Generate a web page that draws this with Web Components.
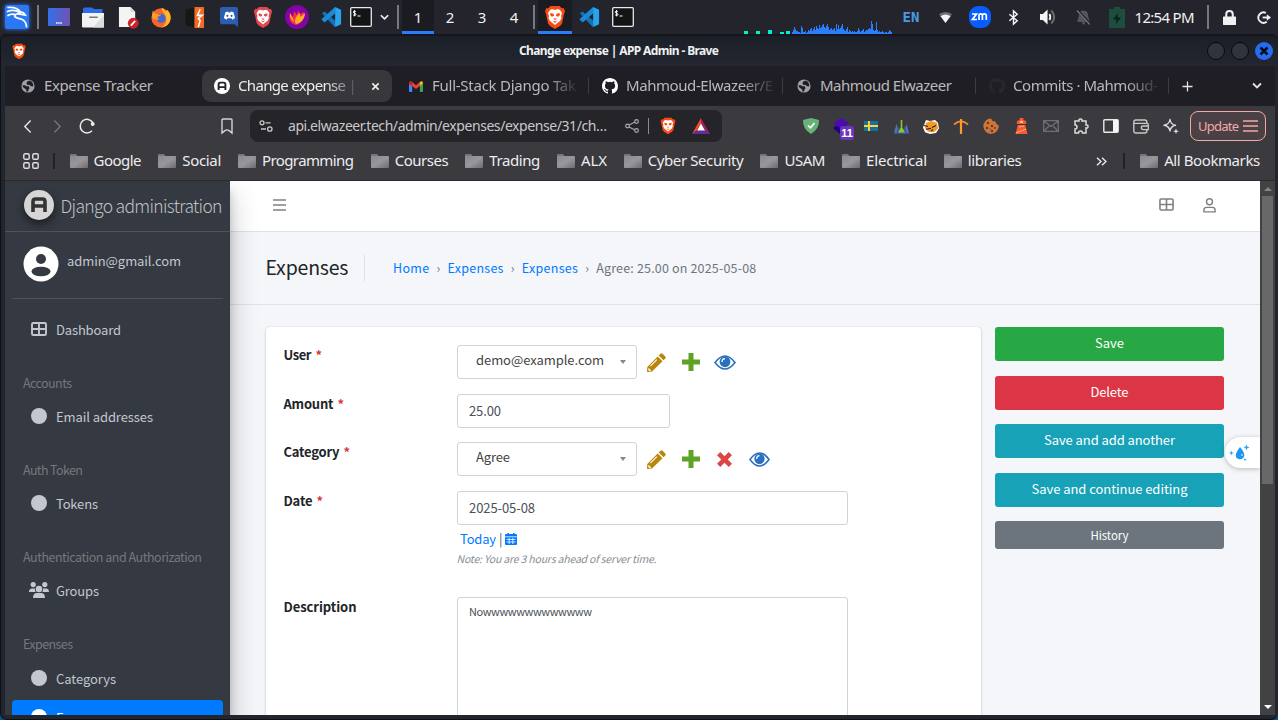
<!DOCTYPE html>
<html lang="en">
<head>
<meta charset="utf-8">
<title>Change expense | APP Admin</title>
<style>
html,body{margin:0;height:720px;overflow:hidden;background:#22242d}
body{font-family:"Noto Sans",sans-serif;font-size:15px;color:#e6e6e8}
</style>
</head>
<body>
<desktop-screen></desktop-screen>
<script>
const lion = (c='#fff',f='#fb542b') => `<path fill="${c}" d="M7 5l2-1 3 1 3-1 2 1 2 3-1 3 .5 2-1.500 3-2.500 2-2.500 2-2.500-2-2.500-2-1.500-3 .5-2-1-3z"/><path fill="${f}" d="M7.500 8l3 .7.600 2-2.200 1-1.900-1.800zM16.500 8l-3 .7-.6 2 2.200 1 1.900-1.800zM10 13.500h4l-2 1.600zM9.500 15.500l2.500 1 2.500-1-2.500 2.500z"/>`;
const shieldPath = 'M7.500 1h9l2.200 2.300 1.800-.3 1.500 3-1 3-2 9.500-2 2.500-5 3-5-3-2-2.500-2-9.500-1-3 1.500-3 1.800.3z';
const octocat = 'M8 0C3.580 0 0 3.580 0 8c0 3.540 2.290 6.530 5.470 7.590.4.070.55-.17.55-.38 0-.19-.01-.82-.01-1.490-2.010.37-2.530-.49-2.690-.94-.09-.23-.48-.94-.82-1.130-.28-.15-.68-.52-.01-.53.630-.01 1.080.58 1.230.82.72 1.210 1.870.87 2.330.66.070-.52.28-.87.510-1.070-1.780-.2-3.640-.89-3.640-3.950 0-.87.310-1.590.82-2.150-.08-.2-.36-1.020.08-2.120 0 0 .67-.21 2.200.82a7.600 7.600 0 0 1 4 0c1.530-1.040 2.200-.82 2.200-.82.44 1.100.16 1.920.08 2.120.51.56.82 1.270.82 2.150 0 3.070-1.870 3.750-3.650 3.950.29.25.54.73.54 1.480 0 1.070-.01 1.930-.01 2.200 0 .21.15.46.55.38A8 8 0 0 0 16 8c0-4.420-3.580-8-8-8z';
const globe = '<circle cx="8" cy="8" r="7.500" fill="#9ea1a6"/><path fill="#1f1e24" d="M1.500 7l3 .2 1.800 1.200 2.500 0 1 2.200-1.300 1.400-.3 2.200-1.800.3-.7-2.800-2.800-1.800zM7 2.800l3.500-1 2.300 1.900 1.600 3.300-1.200 1.600-2.400-.6-1.200-1.500-2.200.3-1.200-1.700z"/>';
const vscode = '<path fill="#1273b8" d="M2 8l3-2 14 12-3 5z"/><path fill="#0d5f9e" d="M2 15l3 2.500L19 6l-2-5z"/><path fill="#29a3ea" d="M16.500 1L23 4v16l-6.500 3z"/><path fill="#1b8ad2" d="M1.500 14.500L16.500 1v7L5 18z"/>';
const term = '<rect x=".7" y=".7" width="20.600" height="18.600" rx="1" fill="#131415" stroke="#e8e8e8" stroke-width="1.300"/><path d="M5.800 4.800c-.7-1-2.600-.9-2.600.3 0 1.500 2.800.8 2.800 2.300 0 1.300-2.200 1.400-2.900.3M4.600 3v6.400M7.500 9h3" fill="none" stroke="#fff"/>';
const grid4 = (s) => `<rect x="1" y="1" width="14" height="12" rx="1.300" fill="none" stroke="currentColor" stroke-width="${s}"/><path d="M8 1v12M1 7h14" stroke="currentColor" stroke-width="${s}"/>`;
const ICONS = {
 kali:['0 0 26 26','<rect x="1" y="1" width="24" height="24" rx="2" fill="#2b78f5"/><path d="M4 3.500c5-.5 10 1 12.500 4.500M3.500 7.500c5-2 9-1 12 1 2.500-.8 4.500.3 5.800 2.500l-3.600-.6c-3-.9-6.500-1-7 1.300-.5 2.600 4 2.200 7 3.500 3.600 1.600 4.600 4 4.800 7.500M4 11.500c2.500-1.800 4.600-1.600 6.300-1.200" fill="none" stroke="#fff" stroke-width="1.700" stroke-linecap="round"/>'],
 desk:['0 0 22 18','<defs><linearGradient id="g"><stop stop-color="#3271e8"/><stop offset="1" stop-color="#7351b4"/></linearGradient></defs><rect width="22" height="18" rx="1" fill="url(#g)"/><path d="M8 15h6" stroke="#fff" stroke-width="1.500" stroke-dasharray="1.500 .7"/>'],
 folder:['0 0 22 21','<path fill="#2b6ee8" d="M1 2q0-1.500 1.500-1.500H10l2 1.500h8.500V8H1z"/><path fill="#f2f2f2" d="M0 6h22v13.500q0 1-1 1H1q-1 0-1-1z"/><path fill="#dcdcdc" d="M22 8v12.500H11z"/><rect x="7" y="9.500" width="9" height="1.600" rx=".8" fill="#777"/>'],
 doc:['0 0 22 24','<path fill="#f4f4f4" d="M1 1h12l5 5v16H1z"/><path fill="#d5d5d5" d="M13 1l5 5h-5z"/><circle cx="16" cy="18" r="5.700" fill="#cc2229"/><path d="M13.500 20.500l4.500-5" stroke="#fff" stroke-width="1.800"/>'],
 firefox:['0 0 24 24','<circle cx="12" cy="13" r="10.500" fill="#f7652a"/><path fill="#ffb62c" d="M13 2c2 0 3 3 3.500 4 1.500-.2 2-2 2-2 3 2 4.500 6 4 10-1 6-6 9.500-11 9.500 5-2 7-6 6-11S12 6 13 2z"/><path fill="#f6a12c" d="M3 5l2 3 4 1-4 6-3-3z"/><circle cx="12" cy="13.500" r="5" fill="#4267cf"/><path fill="#ff9330" d="M6 10l6-1-1 2-3 1 2 3H6z"/>'],
 burp:['0 0 22 20','<path fill="#171717" stroke="#333" stroke-width=".5" d="M1 2l10-2v20L1 18z"/><path fill="#f46a21" d="M11 0h9.500q.5 0 .5.500v19q0 .5-.5.500H11z"/><path d="M17 2l-3 6h5l-4 3 2 2-2 6" fill="none" stroke="#fff" stroke-width="1.500"/>'],
 discord:['0 0 20 21','<path fill="#2b5db0" d="M2 0h16q2 0 2 2v19l-4-3H2q-2 0-2-2V2q0-2 2-2z"/><path fill="#fff" d="M6 5.500l3-.8.500 1h2l.5-1 3 .8 1.700 6-3 1.800-1-1.500H8.300l-1 1.500-3-1.800z"/><circle cx="8.200" cy="9.300" r="1.200" fill="#2b5db0"/><circle cx="12.800" cy="9.300" r="1.200" fill="#2b5db0"/>'],
 bravered:['0 0 24 25',`<path fill="#e3484e" d="${shieldPath}"/>${lion('#fff','#e3484e')}`],
 brave:['0 0 24 25',`<path fill="#fa4a12" d="${shieldPath}"/>${lion('#fff','#fa4a12')}`],
 flame:['0 0 24 24','<circle cx="12" cy="12" r="12" fill="#8104a6"/><path fill="#ff2b4e" d="M8 19C4 16 4 11 5 8l3 4 1-6 3 4 1-5 2 4 4-2c1 6-3 12-8 13z"/><path fill="#ffb01c" d="M11 19c-2-2-1-7 3.500-11l1 4L20 8c0 6-4 10-9 11zM5 8c1 3 3.500 5 4 9-3-2-4.500-5-4-9z"/>'],
 vscode:['0 0 24 24',vscode], term:['0 0 22 20',term],
 chev:['0 0 12 8','<path d="M2 1.500l4 4 4-4" fill="none" stroke="currentColor" stroke-width="1.800"/>'],
 wifi:['0 0 16 14','<path fill="#6b6d72" d="M1 3.500Q8-1.500 15 3.500l-2 2.500Q8 3 3 6z"/><path fill="#f4f4f4" d="M2.600 5.600Q8 2 13.400 5.600L8 13z"/>'],
 zm:['0 0 22 22','<rect width="22" height="22" rx="9" fill="#0b5cff"/><path d="M3 8h4.500L3.400 13.500H8M10 14V9.500q0-1.700 1.700-1.700t1.700 1.700V14M13.400 9.500q0-1.700 1.900-1.700T17.300 9.500V14" fill="none" stroke="#fff" stroke-width="1.700"/>'],
 bt:['0 0 12 16','<path d="M1.500 4.500l8.500 7L6 15V1l4 3.500-8.500 7" fill="none" stroke="#f4f4f4" stroke-width="1.600"/>'],
 vol:['0 0 18 16','<path fill="#f4f4f4" d="M0 5h3l5-4.500v15L3 11H0z"/><path d="M10 5q1.800 3 0 6" fill="none" stroke="#f4f4f4" stroke-width="2"/><path d="M12 1.500q6 6.500 0 13" fill="none" stroke="#6b6d72" stroke-width="2"/>'],
 bell:['0 0 16 16','<path fill="#55575d" d="M8 1.500c4 0 5 3 5 6l1.500 4v1.500h-13V11.500L3 7.500c0-3 1-6 5-6z"/><circle cx="8" cy="14" r="1.500" fill="#55575d"/><path d="M.5.500l15 15" stroke="#22242d" stroke-width="3"/><path d="M1 1.500l13.500 14" stroke="#77797e" stroke-width="1.300"/>'],
 batt:['0 0 16 22','<path fill="#1e4d3f" d="M5 0h6v2h5v20H0V2h5z"/><path fill="#0e2019" d="M9 6l-5 7h3.500L7 18l5-7H8.500z"/>'],
 lock:['0 0 14 16','<path d="M3.500 8V4.500q0-3.500 3.500-3.500t3.500 3.500V8" fill="none" stroke="#f1f1f1" stroke-width="2.200"/><rect y="7" width="14" height="9" rx=".5" fill="#f1f1f1"/>'],
 logout:['0 0 15 14','<path d="M9.500 2A5.600 5.600 0 1 0 10.500 11.500" fill="none" stroke="#f1f1f1" stroke-width="2"/><path d="M6 7h6" stroke="#f1f1f1" stroke-width="2"/><path d="M10.500 3.500L15 7l-4.500 3.500z" fill="#f1f1f1"/>'],
 globe:['0 0 16 16',globe],
 aicon:['0 0 16 16','<circle cx="8" cy="8" r="8" fill="#fff"/><path d="M4.600 12V6.200Q4.600 4.600 6.200 4.600h3.600q1.600 0 1.600 1.600V12M4.600 9.100h6.800" fill="none" stroke="#242328" stroke-width="1.900"/>'],
 x:['0 0 10 10','<path d="M1.500 1.500l7 7m0-7l-7 7" stroke="currentColor" stroke-width="1.800"/>'],
 xbold:['0 0 10 10','<path d="M1.500 1.500l7 7m0-7l-7 7" stroke="currentColor" stroke-width="2.500"/>'],
 gmail:['0 0 16 12','<path fill="#4285f4" d="M0 2h3.600v10H1Q0 12 0 11z"/><path fill="#34a853" d="M12.400 2H16v9q0 1-1 1h-2.600z"/><path fill="#ea4335" d="M0 2.500Q0 0 2.500.4L8 4.500 13 .6V5L8 8.800 0 3z"/><path fill="#fbbc04" d="M12.400 1Q16-1 16 2.500L12.400 5.500z"/><path fill="#c5221f" d="M0 2.500Q.5-.5 3.600 1.200v4.200L0 3z"/>'],
 github:['0 0 16 16',`<path fill="currentColor" d="${octocat}"/>`],
 plus:['0 0 12 12','<path d="M6 .5v11M.5 6h11" stroke="currentColor" stroke-width="1.400"/>'],
 back:['0 0 10 16','<path d="M8.500 1.500L2 8l6.500 6.500" fill="none" stroke="currentColor" stroke-width="1.500"/>'],
 fwd:['0 0 10 16','<path d="M1.500 1.500L8 8l-6.500 6.500" fill="none" stroke="currentColor" stroke-width="1.500"/>'],
 reload:['0 0 16 16','<path d="M13.800 4.500A6.800 6.800 0 1 0 13 12.800" fill="none" stroke="#ebebed" stroke-width="1.500"/><circle cx="13.700" cy="6" r="2" fill="#ebebed"/>'],
 mark:['0 0 12 16','<path d="M1 2Q1 1 2 1h8q1 0 1 1v13l-3.300-2.600q-1.700-1-3.400 0L1 15z" fill="none" stroke="#d4d4d6" stroke-width="1.400"/>'],
 tune:['0 0 14 12','<circle cx="3" cy="2.800" r="2" fill="none" stroke="#c9c9cb" stroke-width="1.300"/><circle cx="10.800" cy="9" r="2.200" fill="none" stroke="#c9c9cb" stroke-width="1.300"/><path d="M6.500 2.800h5M2 9h5" stroke="#c9c9cb" stroke-width="1.300"/>'],
 share:['0 0 14 14','<path d="M4 6l6-3M4 8l6 3" stroke="#a9a9ac" stroke-width="1.100"/><g fill="none" stroke="#a9a9ac" stroke-width="1.200"><circle cx="2.500" cy="7" r="1.800"/><circle cx="11.500" cy="2.500" r="1.800"/><circle cx="11.500" cy="11.500" r="1.800"/></g>'],
 bat:['0 0 18 16','<path fill="#ff4724" d="M9 0v5.500l-4.500 7L0 16z"/><path fill="#9e1f63" d="M9 0l9 16-5-3.500L9 5.500z"/><path fill="#662d91" d="M0 16l4.500-3.700h9L18 16z"/><path fill="#fff" d="M9 5.500l4 7H5z"/>'],
 check:['0 0 16 16','<path fill="#67b279" d="M8 0q4.500 1 8 2 .5 9-8 14-8.500-5-8-14 4-1 8-2z"/><path d="M5 7.500l2.500 2.300L11.500 5" fill="none" stroke="#fff" stroke-width="1.600"/>'],
 layers:['0 0 18 16','<path fill="#1c0080" d="M1 10l8-6 7 5-8 7z"/><path fill="#4b0bb0" d="M1 5.500L9 0l8 5-8 5.500z"/>'],
 sweden:['0 0 15 12','<rect y="1" width="15" height="10" fill="#15709b"/><path d="M5.300 1v10M0 6h15" stroke="#ffd23a" stroke-width="2"/>'],
 cones:['0 0 15 16','<path fill="#5672b9" d="M0 15l2.500-10L5 15zM10 15l2.500-10L15 15z"/><path fill="#35549b" d="M2.500 15l2.200-8 1.800 8zM8.500 15l2-8 2 8z"/><path fill="#8bc91e" d="M3.800 15L6.700 9V1h1.600v8l3 6z"/><path fill="#35549b" d="M0 14.500h15v1.500H0z"/>'],
 tiger:['0 0 16 16','<path fill="#fff" d="M3 1l4 1 5-1 3 3 1 6-3 5-6 1-5-2-2-5z"/><path fill="#f09a2a" d="M3 4l5-2 6 2 1 6-4 4-6-.5-3-4z"/><path d="M1 7l4 1M3 11l5-1M9 9l4-2M8 13l2-2" stroke="#30211a" stroke-width="1.100"/>'],
 pick:['0 0 16 16','<path d="M1 6.500Q8 0 15 6.500" fill="none" stroke="#f08a24" stroke-width="1.800"/><path d="M8 1v15" stroke="#ff9a30" stroke-width="2.200"/>'],
 cookie:['0 0 16 16','<path fill="#cd7638" d="M8 .5l2 3 2-.4 1.500 3 2.200 1.200A7.700 7.700 0 1 1 8 .5z"/><g fill="#6d3520"><circle cx="5" cy="5" r="1.200"/><circle cx="4" cy="10" r="1.200"/><circle cx="9" cy="8" r="1.200"/><circle cx="9" cy="13" r="1.200"/></g><circle cx="7" cy="11" r="1" fill="#5570a5"/><circle cx="12" cy="10" r="1" fill="#8c2535"/>'],
 tower:['0 0 14 16','<path fill="#fa5a30" d="M5 0h4v2l3 1v3H2V3l3-1zM3 7h8l2.500 9H.5z"/><path d="M1 15l11-4M4 9l6-1" stroke="#ffb38c" stroke-width=".9"/><rect x="5.500" y="3" width="3" height="2" fill="#ffc7a1"/>'],
 mail:['0 0 16 12','<path d="M.7.700h14.600v10.600H.7zM1 1l7 5.500L15 1M1 11l5-5M15 11l-5-5" fill="none" stroke="#707074" stroke-width="1.300"/>'],
 puzzle:['0 0 16 16','<path d="M2 3h4q-.5-2 1.500-2T9 3h4v4q2-.5 2 1.500T13 10v5H9.500q0-2-2-2t-2 2H2v-4q2 0 2-2T2 7z" fill="none" stroke="#dcdcde" stroke-width="1.500"/>'],
 panel:['0 0 16 14','<rect x=".8" y=".8" width="14.400" height="12.400" rx="1" fill="none" stroke="#e9e9eb" stroke-width="1.400"/><path fill="#f5f5f6" d="M10 1h5v12h-5z"/>'],
 wallet:['0 0 16 15','<rect x=".8" y="1" width="13" height="13" rx="2" fill="none" stroke="#c8c8ca" stroke-width="1.400"/><path d="M1 4.300h13q1.300 0 1.300 1.300v5h-5q-2 0-2-1.800t2-1.800h5" fill="#3b3a3f" stroke="#c8c8ca" stroke-width="1.300"/>'],
 spark:['0 0 16 16','<path d="M7 1.500q.8 5 5.500 5.800-4.700.8-5.500 5.700Q6.200 8.100 1 7.300q5.200-.8 6-5.800z" fill="none" stroke="#dcdcde" stroke-width="1.400" stroke-linejoin="round"/><path fill="#dcdcde" d="M13 10.500l.8 2 2.200.8-2.200.8-.8 2-.8-2-2.200-.8 2.200-.8z"/>'],
 apps:['0 0 16 16','<g fill="none" stroke="#e0e0e2" stroke-width="1.400"><rect x=".8" y=".8" width="5.400" height="5.400" rx="1.300"/><rect x="9.800" y=".8" width="5.400" height="5.400" rx="1.300"/><rect x=".8" y="9.800" width="5.400" height="5.400" rx="1.300"/><rect x="9.800" y="9.800" width="5.400" height="5.400" rx="1.300"/></g>'],
 bmfolder:['0 0 18 14','<defs><linearGradient id="b" x2="1" y2="1"><stop stop-color="#8b8a8e"/><stop offset=".5" stop-color="#98979b"/><stop offset="1" stop-color="#6c6b70"/></linearGradient></defs><path fill="#77767a" d="M0 1q0-1 1-1h5l1.500 2H0z"/><path fill="url(#b)" d="M0 2h17q1 0 1 1v10q0 1-1 1H1q-1 0-1-1z"/>'],
 dbl:['0 0 11 10','<path d="M1 .8L5 5 1 9.200M6 .8L10 5 6 9.200" fill="none" stroke="#e8e8ea" stroke-width="1.400"/>'],
 lines:['0 0 15 12','<path d="M0 1h15M0 6h15M0 11h15" stroke="currentColor" stroke-width="1.400"/>'],
 user:['0 0 36 36','<circle cx="18" cy="18" r="17.500" fill="#fff"/><circle cx="18" cy="13" r="5" fill="#353941"/><ellipse cx="18" cy="25.500" rx="9.500" ry="4.800" fill="#353941"/>'],
 grid:['0 0 16 14',grid4(1.900)], gridthin:['0 0 16 14',grid4(1.700)],
 dot:['0 0 16 16','<circle cx="8" cy="8" r="8" fill="currentColor"/>'],
 groups:['0 0 20 16','<g fill="currentColor"><circle cx="10" cy="7" r="3.300"/><circle cx="4.200" cy="2.600" r="2.600"/><circle cx="15.800" cy="2.600" r="2.600"/><path d="M4 16q0-5 4-5h4q4 0 4 5zM0 10q0-3.500 3-3.500h3q-.5 2 .8 3.500zM20 10q0-3.500-3-3.500h-3q.5 2-.8 3.500z"/></g>'],
 person:['0 0 14 16','<g fill="none" stroke="currentColor" stroke-width="1.500"><circle cx="7" cy="4" r="3.200"/><path d="M1 14.800v-2Q1 10 4 10h6q3 0 3 2.800v2z"/></g>'],
 burger:['0 0 13 12','<path d="M0 1h13M0 6h13M0 11h13" stroke="#808080" stroke-width="1.600"/>'],
 pencil:['0 0 19 19','<path fill="#b8860b" d="M13.500.700q1-.9 2 0l2.800 2.800q.9 1 0 2L16.500 7.300 11.700 2.500zM10.700 3.500l4.800 4.800L5 18.500l-5 .5.300-5z"/><path fill="#fff" d="M1.500 14.800l2.800 2.800-2 .5-1-1zM9.500 6.200l.7.7-6.500 6.500-.7-.7z"/>'],
 add:['0 0 18 18','<path fill="#5fa225" d="M6.500 0h5v6.500H18v5h-6.500V18h-5v-6.500H0v-5h6.500z"/>'],
 del:['0 0 16 16','<path fill="#dd4646" d="M3.500 0L8 4.500 12.500 0 16 3.500 11.500 8l4.500 4.500-3.500 3.500L8 11.500 3.500 16 0 12.500 4.500 8 0 3.500z"/>'],
 eye:['0 0 22 15','<path d="M1 7.500Q11-5.500 21 7.500 11 20.500 1 7.500z" fill="#fff" stroke="#2b70bf" stroke-width="1.600"/><circle cx="11" cy="6.800" r="5.400" fill="#2b70bf"/><path d="M8 7q0-3.200 3-3.400" fill="none" stroke="#fff" stroke-width="1.200"/>'],
 cal:['0 0 12 12','<path fill="#007bff" d="M0 2q0-1 1-1h1.500V0H4v1h4V0h1.500v1H11q1 0 1 1v9q0 1-1 1H1q-1 0-1-1z"/><path d="M0 3.800h12M1.500 6.500h9M1.500 9h9M4.200 5v6M7.800 5v6" stroke="#fff" stroke-width=".8"/>'],
 drop:['0 0 22 18','<path fill="#1e96f0" d="M11 3q5 6 4.300 9-.8 3-4.300 3.300-3.800-.3-4.300-3.500Q6.500 9 11 3z"/><circle cx="13" cy="11" r="1" fill="#a7d8ff"/><path fill="#38a6f5" d="M2.300 6.500l.7 1.800 1.800.7-1.800.7-.7 1.800-.7-1.800L0 9l1.600-.7zM17.500.500l.9 2 2.100.9-2.100.9-.9 2-.9-2-2.100-.9 2.100-.9zM16 14l.5 1.200 1.200.5-1.200.5-.5 1.300-.5-1.300-1.200-.5 1.200-.5z"/>'],
};
function define(tag, css, html, setup){
  const t = document.createElement('template');
  t.innerHTML = `<style>:host{box-sizing:border-box}*{box-sizing:border-box}${css}</style>${html}`;
  customElements.define(tag, class extends HTMLElement{
    connectedCallback(){
      if(this.shadowRoot) return;
      const r = this.attachShadow({mode:'open'});
      r.append(document.importNode(t.content,true));
      if(setup) setup(this,r);
    }
  });
}
/* Moves the host's text into its label */
const relabel=(h,r)=>{const l=r.querySelector('ui-label');l.textContent=h.textContent;if(h.hasAttribute('w'))l.setAttribute('w',h.getAttribute('w'));};
/* Icon: name, w, h */
define('ui-icon',':host{display:block;flex:none}svg{display:block;width:100%;height:100%;overflow:visible}','<svg></svg>',(h,r)=>{
  const i=ICONS[h.getAttribute('name')]; if(!i) return;
  h.style.width=h.getAttribute('w')+'px'; h.style.height=h.getAttribute('h')+'px';
  const s=r.querySelector('svg'); s.setAttribute('viewBox',i[0]); s.setAttribute('preserveAspectRatio','none'); s.innerHTML=i[1];
});
/* Single-line label tracked out to an even width */
define('ui-label',':host{display:block;flex:none;white-space:nowrap}span{display:inline-block}','<span><slot></slot></span>',(h,r)=>{
  queueMicrotask(()=>{
    const w=+h.getAttribute('w'); if(!w) return;
    const n=h.textContent.length, nat=r.querySelector('span').getBoundingClientRect().width;
    h.style.letterSpacing=((w-nat)/(n-1)).toFixed(3)+'px'; h.style.width=w+'px';
  });
});
/* Fixed-width cell that centres its content */
define('ui-cell',':host{display:flex;align-items:center;justify-content:center;flex:none;height:100%}','<slot></slot>',h=>{h.style.width=h.getAttribute('w')+'px'});
define('ui-rule',':host{display:block;flex:none;width:2px;height:24px;background:#77797d}','');

define('load-graph',':host{display:block;width:148px;height:34px;flex:none}svg{display:block}','<svg width="148" height="34"></svg>',(h,r)=>{
  const v=[1,3,6,4,2,2,1,1,0,7,5,1,1,2,0,1,3,2,4,5,2,4,6,3,7,5,4,8,5,6,8,9,6,5,7,9,6,3,4,5,3,4,5,2,9,4,8,4,5,7,9,4,3,2,4,6,1,3,2,1,2,1,2,1,1,2,5,3,1,2,3,4,1,2,3,3,4,5,4,12,9,3,2,3,11,3,1,2,1,1,2,1,0,1,1,0,1,3,2,1];
  let s='<g fill="#00f0d0"><path d="M0 31h4v3H0zM12 31h4v3h-4zM24 30h4v4h-4zM36 32h4v2h-4zM42 31h4v3h-4z"/></g><g fill="#2a7dff">';
  v.forEach((y,i)=>s+=`<rect x="${48+i}" y="${33-y}" width="1" height="${y+1}"/>`);
  r.querySelector('svg').innerHTML=s+'</g>';
});
define('desktop-panel',`:host{display:flex;align-items:center;height:34px;color:#f1f1f1;font-size:15px;background:#23242c}
.ws{background:linear-gradient(#1a1c22 31px,#2a7bff 31px)}`,`
<ui-cell w="34"><ui-icon name="kali" w="26" h="26" style="filter:drop-shadow(0 0 2px #2b78f5)"></ui-icon></ui-cell><ui-cell w="8"><ui-rule></ui-rule></ui-cell>
<ui-cell w="34"><ui-icon name="desk" w="22" h="18"></ui-icon></ui-cell><ui-cell w="34"><ui-icon name="folder" w="22" h="21"></ui-icon></ui-cell><ui-cell w="36"><ui-icon name="doc" w="21" h="23"></ui-icon></ui-cell><ui-cell w="30"><ui-icon name="firefox" w="22" h="22"></ui-icon></ui-cell><ui-cell w="36"><ui-icon name="burp" w="21" h="21"></ui-icon></ui-cell><ui-cell w="34"><ui-icon name="discord" w="18" h="20"></ui-icon></ui-cell><ui-cell w="34"><ui-icon name="bravered" w="22" h="23"></ui-icon></ui-cell><ui-cell w="34"><ui-icon name="flame" w="24" h="24"></ui-icon></ui-cell><ui-cell w="34"><ui-icon name="vscode" w="22" h="22"></ui-icon></ui-cell><ui-cell w="26"><ui-icon name="term" w="22" h="20"></ui-icon></ui-cell><ui-cell w="20"><ui-icon name="chev" w="11" h="7"></ui-icon></ui-cell>
<ui-cell w="8"><ui-rule></ui-rule></ui-cell><ui-cell class="ws" w="32">1</ui-cell><ui-cell w="32">2</ui-cell><ui-cell w="32">3</ui-cell><ui-cell w="32">4</ui-cell><ui-cell w="8"><ui-rule></ui-rule></ui-cell>
<ui-cell class="ws" w="34"><ui-icon name="brave" w="24" h="25"></ui-icon></ui-cell><ui-cell w="34"><ui-icon name="vscode" w="22" h="22"></ui-icon></ui-cell><ui-cell w="34"><ui-icon name="term" w="22" h="20"></ui-icon></ui-cell>
<load-graph style="margin:0 6px 0 104px"></load-graph>
<ui-cell w="26" style="color:#4b9be0;font:bold 14px 'DejaVu Sans Mono',monospace">EN</ui-cell><ui-cell w="42"><ui-icon name="wifi" w="15" h="13"></ui-icon></ui-cell><ui-cell w="28"><ui-icon name="zm" w="22" h="22"></ui-icon></ui-cell><ui-cell w="38"><ui-icon name="bt" w="11" h="15"></ui-icon></ui-cell><ui-cell w="32"><ui-icon name="vol" w="17" h="16"></ui-icon></ui-cell><ui-cell w="38"><ui-icon name="bell" w="15" h="16"></ui-icon></ui-cell><ui-cell w="30"><ui-icon name="batt" w="16" h="21"></ui-icon></ui-cell>
<ui-cell w="66"><ui-label w="60" style="margin:-1px 1px 0 0">12:54 PM</ui-label></ui-cell><ui-cell w="20"><ui-rule></ui-rule></ui-cell><ui-cell w="22"><ui-icon name="lock" w="13" h="15"></ui-icon></ui-cell><ui-cell w="28" style="margin-left:10px"><ui-icon name="logout" w="14" h="13"></ui-icon></ui-cell>`);

define('title-bar',`:host{display:flex;align-items:center;height:32px;padding:0 5px 0 10px;border-top:2px solid #14161b;background:linear-gradient(#1b1f27,#242731);font-size:12px;font-weight:bold;color:#f0f1f3;border-radius:6px 6px 0 0}
i{width:18px;height:18px;border-radius:50%;background:#31343f;border:1px solid #08090b;margin-right:6px}b{width:18px;height:18px;border-radius:50%;background:#256cf2;color:#0a0d14;display:grid;place-items:center}`,
`<ui-icon name="brave" w="16" h="17"></ui-icon><ui-label w="200" style="margin:-1px auto 0 492px"></ui-label><i></i><i></i><b><ui-icon name="xbold" w="10" h="10"></ui-icon></b>`,(h,r)=>relabel(h,r));

define('browser-tab',`:host{display:flex;align-items:center;height:32px;border-radius:9px;color:#b9b9bc;font-size:15px;flex:none}
:host([active]){background:#38373c;color:#ededee}
div{margin:-2px 0 0 8px;overflow:hidden;flex:none}:host([fade]) div{-webkit-mask:linear-gradient(90deg,#000 calc(100% - 34px),transparent)}`,
`<slot name="icon"></slot><div><slot></slot></div><slot name="end"></slot>`,(h,r)=>{h.style.width=h.getAttribute('w')+'px';r.querySelector('div').style.width=h.getAttribute('tw')+'px'});
define('tab-strip',`:host{display:flex;align-items:center;height:40px;background:#1f1e24;color:#e2e2e4}s{width:1px;height:16px;background:#3e3d43;flex:none}`,`
<browser-tab w="197" tw="112" style="padding-left:16px"><ui-icon slot="icon" name="globe" w="14" h="14" style="margin-right:1px"></ui-icon><ui-label w="109">Expense Tracker</ui-label></browser-tab>
<browser-tab active fade w="190" tw="122" style="padding-left:12px"><ui-icon slot="icon" name="aicon" w="16" h="16"></ui-icon><ui-label w="131">Change expense | A</ui-label><ui-icon slot="end" name="x" w="9" h="9" style="margin-left:11px"></ui-icon></browser-tab>
<browser-tab fade w="196" tw="148" style="padding-left:17px"><ui-icon slot="icon" name="gmail" w="14" h="11" style="margin-right:1px"></ui-icon><ui-label w="144">Full-Stack Django Tak</ui-label></browser-tab><s></s>
<browser-tab fade w="193" tw="150" style="padding-left:13px"><ui-icon slot="icon" name="github" w="16" h="16" style="color:#fff"></ui-icon><ui-label w="147">Mahmoud-Elwazeer/E</ui-label></browser-tab><s></s>
<browser-tab w="192" tw="136" style="padding-left:14px"><ui-icon slot="icon" name="globe" w="14" h="14" style="margin-right:1px"></ui-icon><ui-label w="132">Mahmoud Elwazeer</ui-label></browser-tab><s></s>
<browser-tab fade w="192" tw="148" style="padding-left:13px"><ui-icon slot="icon" name="github" w="16" h="16" style="color:#25292e"></ui-icon><ui-label w="145">Commits · Mahmoud-</ui-label></browser-tab><s></s>
<ui-cell w="36"><ui-icon name="plus" w="11" h="11"></ui-icon></ui-cell><ui-cell w="36" style="margin-left:auto"><ui-icon name="chev" w="12" h="8"></ui-icon></ui-cell>`);

define('address-bar',`:host{display:flex;align-items:center;width:472px;height:32px;border-radius:8px;background:#252429;color:#c8c8cb;font-size:14px;padding-left:9px}s{width:1px;height:16px;background:#8b8b8f}`,
`<ui-icon name="tune" w="14" h="12"></ui-icon><ui-label w="319" style="margin:-1px 18px 0 15px"></ui-label><ui-icon name="share" w="14" h="14"></ui-icon><s style="margin:0 10px 0 9px"></s><ui-icon name="brave" w="18" h="18"></ui-icon><ui-icon name="bat" w="18" h="16" style="margin-left:15px"></ui-icon>`,(h,r)=>relabel(h,r));
define('nav-toolbar',`:host{display:flex;align-items:center;height:40px;color:#ebebed}
.up{margin-left:4px;width:76px;height:30px;border:1px solid #f2a9ab;border-radius:8px;background:#4b4145;color:#f2a9ab;display:flex;align-items:center;justify-content:center;gap:4px;font-size:13px}
.lay{position:relative}.badge{position:absolute;left:14px;top:20px;width:14px;height:14px;border-radius:3px;background:#6a35b8;color:#fff;font:bold 11px/14px "Liberation Sans",sans-serif;text-align:center}`,
`<ui-cell w="30" style="margin-left:7px"><ui-icon name="back" w="9" h="15"></ui-icon></ui-cell><ui-cell w="30"><ui-icon name="fwd" w="9" h="15" style="color:#77767b"></ui-icon></ui-cell><ui-cell w="30"><ui-icon name="reload" w="16" h="16"></ui-icon></ui-cell><ui-cell w="30" style="margin-left:110px"><ui-icon name="mark" w="12" h="16"></ui-icon></ui-cell>
<address-bar style="margin:0 74px 0 8px">api.elwazeer.tech/admin/expenses/expense/31/ch…</address-bar>
<ui-cell w="30"><ui-icon name="check" w="16" h="16"></ui-icon></ui-cell><ui-cell w="30" class="lay"><ui-icon name="layers" w="18" h="16"></ui-icon><span class="badge">11</span></ui-cell><ui-cell w="30"><ui-icon name="sweden" w="14" h="12"></ui-icon></ui-cell><ui-cell w="30"><ui-icon name="cones" w="15" h="15"></ui-icon></ui-cell><ui-cell w="30"><ui-icon name="tiger" w="16" h="15"></ui-icon></ui-cell><ui-cell w="30"><ui-icon name="pick" w="16" h="16"></ui-icon></ui-cell><ui-cell w="30"><ui-icon name="cookie" w="16" h="16"></ui-icon></ui-cell><ui-cell w="30"><ui-icon name="tower" w="13" h="16"></ui-icon></ui-cell><ui-cell w="30"><ui-icon name="mail" w="16" h="12"></ui-icon></ui-cell><ui-cell w="30"><ui-icon name="puzzle" w="16" h="16"></ui-icon></ui-cell><ui-cell w="30"><ui-icon name="panel" w="16" h="14"></ui-icon></ui-cell><ui-cell w="30"><ui-icon name="wallet" w="16" h="15"></ui-icon></ui-cell><ui-cell w="30"><ui-icon name="spark" w="16" h="16"></ui-icon></ui-cell>
<div class="up"><ui-label w="41">Update</ui-label><ui-icon name="lines" w="15" h="12"></ui-icon></div>`);
define('book-mark',`:host{display:flex;align-items:center;gap:6px;flex:none}ui-label{margin-top:-2px}`,`<ui-icon name="bmfolder" w="18" h="14" style="margin-top:-1px"></ui-icon><ui-label></ui-label>`,(h,r)=>relabel(h,r));
define('bookmarks-bar',`:host{display:flex;align-items:center;height:34px;margin-top:-2px;font-size:15px;color:#ededef;padding-left:18px}section{display:flex;gap:16.700px}s{width:2px;height:16px;background:#222127}`,
`<ui-icon name="apps" w="16" h="16"></ui-icon><s style="margin:0 14.600px 0 14px"></s><section></section><ui-icon name="dbl" w="11" h="9" style="margin-left:74.400px"></ui-icon><s style="margin:0 15px 0 16px"></s><book-mark w="96">All Bookmarks</book-mark>`,(h,r)=>{
  r.querySelector('section').innerHTML=[['Google',48],['Social',39],['Programming',92],['Courses',54],['Trading',51],['ALX',26],['Cyber Security',96],['USAM',41],['Electrical',61],['libraries',54]].map(([t,w])=>`<book-mark w="${w}">${t}</book-mark>`).join('');
});

/* Admin page */
define('side-link',`:host{display:flex;align-items:center;height:36px;margin:0 7px;padding-left:17px;border-radius:4px;color:#c2c7d0}:host([active]){background:#007bff;color:#fff}
ui-icon{margin-top:-2px}div{width:20px;display:flex;justify-content:center;margin-right:7px}`,
`<div></div><ui-label></ui-label>`,(h,r)=>{const a=n=>h.getAttribute(n);
 r.querySelector('div').innerHTML=`<ui-icon name="${a('icon')}" w="${a('iw')||16}" h="${a('ih')||16}"></ui-icon>`;relabel(h,r);});
define('admin-sidebar',`:host{display:block;width:225px;height:534px;overflow:hidden;background:#353941;color:#c2c7d0;font-size:13px;line-height:20px;flex:none}
:host{--l:#4e535b}.brand{display:flex;align-items:center;height:51px;border-bottom:1px solid var(--l);padding-left:18px;font-size:17.500px;font-weight:300;color:#bfc2c6}
.logo{width:30px;height:30px;border-radius:50%;background:#d6d6d6;box-shadow:0 4px 8px rgba(0,0,0,.5);display:grid;place-items:center;margin:-3px 7px 0 .5px}
.user{display:flex;align-items:center;height:67px;margin:0 7px;padding-left:11px;border-bottom:1px solid var(--l)}
h6{margin:26px 0 5px;font:inherit;font-size:12.500px;color:#74787c;padding-left:18px;height:20px;line-height:20px;display:flex;align-items:flex-start}h6 ui-label{margin-top:-1px}`,
`<div class="brand"><div class="logo"><svg width="16" height="16" viewBox="0 0 16 16"><path d="M2 15V4.500Q2 2 4.500 2h7Q14 2 14 4.500V15M2 9h12" fill="none" stroke="#333" stroke-width="3.600"/></svg></div><ui-label w="162">Django administration</ui-label></div>
<div class="user"><ui-icon name="user" w="36" h="36" style="margin-top:-2px"></ui-icon><ui-label w="114" style="margin:-9px 0 0 8px">admin@gmail.com</ui-label></div>
<side-link icon="grid" ih="14" w="65" style="margin-top:13px">Dashboard</side-link>
<h6><ui-label w="49">Accounts</ui-label></h6><side-link icon="dot" w="97">Email addresses</side-link>
<h6><ui-label w="60">Auth Token</ui-label></h6><side-link icon="dot" w="42">Tokens</side-link>
<h6><ui-label w="179">Authentication and Authorization</ui-label></h6><side-link icon="groups" iw="20" w="43">Groups</side-link>
<h6><ui-label w="50">Expenses</ui-label></h6><side-link icon="dot" w="60" style="margin-top:6px">Categorys</side-link>
<side-link active icon="dot" w="54" style="margin-top:3px">Expenses</side-link>`);

define('field-row',`:host{display:grid;grid-template-columns:173.500px 1fr;align-items:start}label{font-weight:bold;color:#212529;line-height:20px;display:flex;gap:4px}em{font-style:normal;color:#dc3545}.c{display:flex;align-items:center}`,
`<label><ui-label></ui-label><em>*</em></label><div class="c"><slot></slot></div>`,(h,r)=>{const l=r.querySelector('ui-label');l.textContent=h.getAttribute('label');l.setAttribute('w',h.getAttribute('w'));if(h.hasAttribute('optional'))r.querySelector('em').remove();});
define('text-box',`:host{display:flex;align-items:center;height:34px;border:1px solid #ced4da;border-radius:3px;background:#fff;color:#495057;padding-left:11px;flex:none}`,'<slot></slot>',h=>{h.style.width=h.getAttribute('w')+'px'});
define('select-box',`:host{display:flex;align-items:center;width:180px;height:34px;border:1px solid #ced4da;border-radius:3px;background:#fff;color:#444;padding:0 10px 0 18px;flex:none;margin-right:10px}i{margin-left:auto;border:3px solid transparent;border-top:4px solid #888;border-bottom:0}div{margin-top:-5px}`,'<div><slot></slot></div><i></i>');
define('form-card',`:host{display:block;width:715px;height:420px;border-radius:4px;background:#fff;box-shadow:0 0 1px rgba(0,0,0,.125),0 1px 3px rgba(0,0,0,.2);padding:18px 18px 0 17.500px;flex:none}
field-row+field-row{margin-top:14.600px}.note{margin:0 0 0 173px}.t{display:flex;align-items:center;height:20px;color:#007bff;margin-top:4px;padding-left:3.600px}.n{font-style:italic;font-size:10.500px;color:#868e96;height:20px;line-height:20px;margin-bottom:28px}`,
`<field-row label="User" w="28"><select-box><ui-label w="128">demo@example.com</ui-label></select-box><ui-icon name="pencil" w="19" h="19"></ui-icon><ui-icon name="add" w="18" h="18" style="margin-left:16px"></ui-icon><ui-icon name="eye" w="22" h="15" style="margin-left:14px"></ui-icon></field-row>
<field-row label="Amount" w="50"><text-box w="213"><ui-label w="32">25.00</ui-label></text-box></field-row>
<field-row label="Category" w="56"><select-box><ui-label w="34">Agree</ui-label></select-box><ui-icon name="pencil" w="19" h="19"></ui-icon><ui-icon name="add" w="18" h="18" style="margin-left:16px"></ui-icon><ui-icon name="del" w="15" h="15" style="margin-left:17px"></ui-icon><ui-icon name="eye" w="21" h="15" style="margin-left:17px"></ui-icon></field-row>
<field-row label="Date" w="29"><text-box w="391"><ui-label w="66">2025-05-08</ui-label></text-box></field-row>
<div class="note"><div class="t"><ui-label w="36">Today</ui-label><span style="color:#55595d;margin:0 2px 0 3px">|</span><ui-icon name="cal" w="12" h="12"></ui-icon></div><div class="n"><ui-label w="200">Note: You are 3 hours ahead of server time.</ui-label></div></div>
<field-row label="Description" w="73" optional><text-box w="391" style="height:170px;align-items:start;font-size:11px;padding-top:3px;line-height:20px"><ui-label w="123">Nowwwwwwwwwwwww</ui-label></text-box></field-row>`);
define('action-button',`:host{display:grid;place-items:center;height:34px;border-radius:3px;background:var(--c);color:#fff}ui-label{margin-top:var(--lift,-2px)}`,'<ui-label></ui-label>',(h,r)=>relabel(h,r));
define('bread-crumbs',`:host{display:flex;align-items:center;gap:7.300px;color:#6c757d;font-size:12.500px}a{color:#007bff}`,
`<a><ui-label w="36">Home</ui-label></a><span>›</span><a><ui-label w="56">Expenses</ui-label></a><span>›</span><a><ui-label w="56">Expenses</ui-label></a><span>›</span><ui-label w="160">Agree: 25.00 on 2025-05-08</ui-label>`);
define('scroll-bar',`:host{display:flex;flex-direction:column;align-items:center;width:15px;height:534px;background:#424242;flex:none}i{border:4px solid transparent;border-top:0;border-bottom:4px solid #858585;margin:6px 0 5px}b{width:11px;height:288px;background:#686868}u{margin:auto 0 6px;border:4px solid transparent;border-bottom:0;border-top:4px solid #fff}`,'<i></i><b></b><u></u>');
define('admin-main',`:host{display:block;width:1030px;height:534px;background:#f4f6f9;overflow:hidden;position:relative;flex:none}
.bar{display:flex;align-items:center;height:51px;background:#fff;border-bottom:1px solid #dee2e6;padding:0 44px 3px 43px;color:#808080}
.head{display:flex;align-items:center;height:73px;border-bottom:1px solid #dee2e6;padding-left:35.500px;color:#212529}
.head s{width:1px;height:26px;background:#dee2e6;margin:0 28.600px 0 15px}.cols{display:flex;gap:14px;padding:22px 36px 0 36px}aside{display:flex;flex-direction:column;gap:14.600px;width:229px}
.float{position:absolute;right:0;top:256px;width:35px;height:31px;border-radius:16px 0 0 16px;background:#fff;box-shadow:0 1px 5px rgba(0,0,0,.25);padding:7px 0 0 4px}
.shade{position:absolute;left:-20px;top:0;width:20px;height:600px;box-shadow:0 14px 28px rgba(0,0,0,.25),0 10px 10px rgba(0,0,0,.18)}`,
`<div class="bar"><ui-icon name="burger" w="13" h="12"></ui-icon><ui-icon name="gridthin" w="15" h="13" style="margin-left:auto"></ui-icon><ui-icon name="person" w="13" h="15" style="margin-left:29px;margin-top:2px"></ui-icon></div>
<div class="head"><ui-label w="83" style="font-size:19.500px;margin-top:-2px">Expenses</ui-label><s></s><bread-crumbs></bread-crumbs></div>
<div class="cols"><form-card></form-card><aside><action-button w="29" style="--c:#28a745">Save</action-button><action-button w="38" style="--c:#dc3545">Delete</action-button><action-button w="131" style="--c:#17a2b8">Save and add another</action-button><action-button w="156" style="--c:#17a2b8">Save and continue editing</action-button><action-button w="38" style="--c:#6c757d;--lift:0;height:28px;font-size:11.500px">History</action-button></aside></div>
<div class="float"><ui-icon name="drop" w="22" h="18"></ui-icon></div><div class="shade"></div>`);
define('admin-page',`:host{display:flex;width:1270px;height:534px;font-family:"Noto Sans CJK SC","Noto Sans",sans-serif;font-size:13px;line-height:20px}`,'<admin-sidebar></admin-sidebar><admin-main></admin-main><scroll-bar></scroll-bar>');
define('browser-window',`:host{display:block;height:686px;background:#22252e;border-left:1px solid #0e1015;border-bottom:1px solid #0e1015;border-radius:7px}.in{width:1270px;margin-left:4px}.tools{background:#3b3a3f;height:75px;border-bottom:1px solid #2b2a30}`,
`<title-bar>Change expense | APP Admin - Brave</title-bar><div class="in"><tab-strip></tab-strip><div class="tools"><nav-toolbar></nav-toolbar><bookmarks-bar></bookmarks-bar></div><admin-page></admin-page></div>`);
define('desktop-screen',`:host{display:block;width:1278px;height:720px;overflow:hidden;background:linear-gradient(#23242c 600px,#0b4f80 700px)}`,'<desktop-panel></desktop-panel><browser-window></browser-window>');
</script>
</body>
</html>
